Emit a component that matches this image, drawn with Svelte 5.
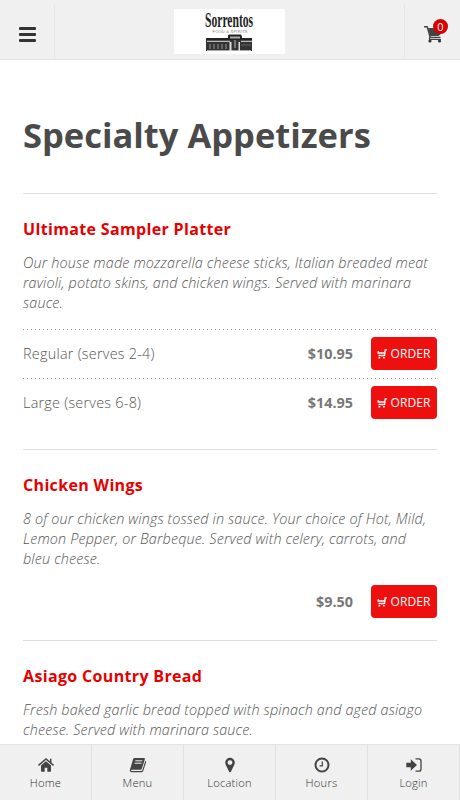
<script>
const items = [
    {
        title: 'Ultimate Sampler Platter',
        text: 'Our house made mozzarella cheese sticks, Italian breaded meat ravioli, potato skins, and chicken wings. Served with marinara sauce.',
        options: [
            { name: 'Regular (serves 2-4)', price: '$10.95' },
            { name: 'Large (serves 6-8)', price: '$14.95' },
        ],
    },
    {
        title: 'Chicken Wings',
        text: '8 of our chicken wings tossed in sauce. Your choice of Hot, Mild, Lemon Pepper, or Barbeque. Served with celery, carrots, and bleu cheese.',
        options: [{ name: '', price: '$9.50' }],
    },
    {
        title: 'Asiago Country Bread',
        text: 'Fresh baked garlic bread topped with spinach and aged asiago cheese. Served with marinara sauce.',
        options: [],
    },
];
const tabs = ['Home', 'Menu', 'Location', 'Hours', 'Login'];
let count = 0;
</script>

<div class="page">
  <header>
    <button class="toggle" aria-label="Open menu"><span></span><span></span><span></span></button>
    <div class="brand">
      <svg width="111" height="45" viewBox="0 0 111 45">
        <rect width="111" height="45" fill="#fff" />
        <text class="logo-name" transform="translate(31 17.500) scale(.58 1)">Sorrentos</text>
        <text class="logo-sub" x="38.500" y="23.500" textLength="35">FOOD &amp; SPIRITS</text>
        <path d="M32 29h22v-2.500l1-1h12l1 2v1.500h10v2H32z" fill="#222" />
        <path d="M32 31h46v11H32z" fill="#333" />
        <path d="M56 27.500h10v2H56z" fill="#aaa" />
        <path d="M33 32.300h23M67 32.300h11" stroke="#ddd" />
        <path d="M33 41.500h44" stroke="#aaa" />
        <path d="M36 35v5M40 35v5M44 35v5M48 35v5M52 35v5" stroke="#999" />
        <path d="M55.500 33h2v9h-2zM64.500 33h1.500v9h-1.500z" fill="#ddd" />
        <path d="M60 31h2v8h-2z" fill="#777" />
        <path d="M67 36h10" stroke="#888" stroke-width=".6" />
      </svg>
    </div>
    <button class="cart" aria-label="Cart">
      <svg width="19" height="17" viewBox="0 0 19 17">
        <path d="M0 .8h3.200l3 10.700h10.300" fill="none" stroke="#444" stroke-width="1.400" />
        <path d="M4 2h13.500v5.500l-3 2.500H6z" fill="#444" />
        <path d="M5.500 11v2.500H17" fill="none" stroke="#444" stroke-width="1.100" />
        <circle cx="6" cy="15" r="1.600" fill="#333" />
        <circle cx="15.500" cy="15" r="1.600" fill="#333" />
      </svg>
      <span class="badge">{count}</span>
    </button>
  </header>

  <main>
    <h1>Specialty Appetizers</h1>
    {#each items as item}
      <section>
        <h2>{item.title}</h2>
        <p>{item.text}</p>
        <div class="options" class:multiple={item.options.length > 1}>
          {#each item.options as option}
            <div class="option">
              <span class="name">{option.name}</span>
              <strong>{option.price}</strong>
              <button class="order">
                <svg width="10" height="10" viewBox="0 0 10 10">
                  <path d="M10 .8H8.200L7.600 6.500H1.500" fill="none" stroke="#fff" stroke-width="1.300" />
                  <path d="M.5 2.300h1.600v1h6v1.500H.5z" fill="#fff" />
                  <path d="M1.500 7.900h1.700v1.700H1.500zM6 7.900h1.700v1.700H6z" fill="#fff" />
                </svg>
                <span>ORDER</span>
              </button>
            </div>
          {/each}
        </div>
      </section>
    {/each}
  </main>

  <nav>
    {#each tabs as tab}
      <a href="#{tab.toLowerCase()}">
        <svg width="18" height="16" viewBox="0 0 18 16" fill="#444">
          {#if tab === 'Home'}
            <path d="M9 4.200l5 4.200V14a.7.700 0 0 1-.7.700h-3v-4H7.700v4h-3A.7.700 0 0 1 4 14V8.400z" />
            <path d="M1.500 8.400L9 2l7.500 6.400M13.700 1.800v4" fill="none" stroke="#444" stroke-width="1.500" />
          {:else if tab === 'Menu'}
            <path d="M5.700 1h9.100c.9 0 1.300.6 1 1.500l-3 9.300c-.2.600-.7 1-1.400 1H2.900c-1 0-1 1.200 0 1.200h9.300c.6 0 1-.3 1.200-.9l3-9.400c.7.300.9.800.7 1.500l-2.900 8.800c-.3.800-1 1.300-1.900 1.300H2.900C1.200 15.300.5 13.700 1 12.500L4 2.400C4.300 1.500 4.900 1 5.700 1z" />
            <path d="M6.300 3.800h7M5.600 6.200h7" stroke="#f0f0f0" stroke-width="1" />
          {:else if tab === 'Location'}
            <path fill-rule="evenodd" d="M9 .8a4.800 4.800 0 0 1 4.800 4.800c0 .9-.2 1.600-.5 2.200l-3.400 6.900c-.4.800-1.400.8-1.800 0L4.700 7.800a5 5 0 0 1-.5-2.200A4.800 4.800 0 0 1 9 .8zM9 3.200a2.400 2.400 0 1 0 0 4.800 2.400 2.400 0 0 0 0-4.800z" />
          {:else if tab === 'Hours'}
            <circle cx="9" cy="8" r="6.500" fill="none" stroke="#444" stroke-width="2" />
            <path d="M9.300 4.500v4.300H6.500" fill="none" stroke="#444" stroke-width="1.200" />
          {:else}
            <path d="M1.300 5.700h4.500V2.200L12 8l-6.200 5.800v-3.500H1.300z" />
            <path d="M10.500 1.800h3.300c1.500 0 2.200.7 2.200 2.200v8c0 1.500-.7 2.200-2.200 2.200h-3.300" fill="none" stroke="#444" stroke-width="1.300" />
          {/if}
        </svg>
        <span>{tab}</span>
      </a>
    {/each}
  </nav>
</div>

<style>
:global(body) {
  margin: 0;
  background: #fff;
}

.page {
  display: flex;
  flex-direction: column;
  height: 800px;
  overflow: hidden;
  font-family: "Open Sans", "Noto Sans", sans-serif;
  font-weight: 300;
  color: #555;
}

button {
  border: 0;
  padding: 0;
  background: none;
  font: inherit;
}

header {
  display: flex;
  flex: none;
  height: 60px;
  box-sizing: border-box;
  padding-top: 4px;
  background: #f0f0f0;
  border-bottom: 1px solid #e3e3e3;
}

.toggle {
  display: flex;
  flex-direction: column;
  align-items: center;
  justify-content: center;
  gap: 3px;
  width: 55px;
  padding-top: 5px;
  border-right: 1px solid #e6e6e6;
}

.toggle span {
  width: 17px;
  height: 3px;
  border-radius: 1px;
  background: #333;
}

.brand {
  display: flex;
  flex: 1;
  justify-content: center;
  padding-top: 5px;
}

.logo-name {
  font: bold 20px "Liberation Serif", serif;
  fill: #222;
}

.logo-sub {
  font: 4px "Liberation Sans", sans-serif;
  fill: #777;
}

.cart {
  position: relative;
  width: 56px;
  padding: 6px 0 0 1px;
  border-left: 1px solid #e6e6e6;
}

.cart svg {
  display: block;
  margin: 0 auto;
}

.badge {
  position: absolute;
  top: 15px;
  right: 12px;
  width: 15px;
  height: 15px;
  border-radius: 50%;
  background: #d80000;
  color: #fff;
  font-size: 11px;
  font-weight: 400;
  line-height: 15px;
  text-align: center;
}

main {
  flex: 1;
  min-height: 0;
  overflow: hidden;
  padding: 0 23px;
}

h1 {
  margin: 0;
  padding: 50px 0 33px;
  color: #4a4a4a;
  font-size: 34.5px;
  font-weight: 700;
  line-height: 50px;
}

section {
  padding: 23px 0 22px;
  border-top: 1px solid #ddd;
}

h2 {
  margin: 0 0 12px;
  color: #e60000;
  font-size: 16px;
  font-weight: 700;
  letter-spacing: .34px;
  line-height: 24px;
}

p {
  margin: 0 0 16px;
  font-size: 14.4px;
  font-style: italic;
  letter-spacing: .14px;
  line-height: 20px;
}

.option {
  display: flex;
  align-items: center;
  font-size: 14.4px;
}

.multiple .option {
  padding: 8px 0;
  background: repeating-linear-gradient(90deg, #999 0 1px, transparent 1px 4px) top / 100% 1px no-repeat;
}

.name {
  flex: 1;
  letter-spacing: .25px;
}

.name,
strong {
  margin-top: -1px;
}

strong {
  margin-right: 18px;
  color: #777;
  font-weight: 700;
}

.order {
  display: flex;
  align-items: center;
  justify-content: center;
  gap: 3px;
  width: 66px;
  height: 33px;
  border-radius: 4px;
  background: #ee0f0f;
  color: #fff;
  font-size: 12px;
  font-weight: 400;
  letter-spacing: .1px;
}

nav {
  display: flex;
  flex: none;
  height: 56px;
  box-sizing: border-box;
  border-top: 1px solid #e3e3e3;
  background: #f0f0f0;
}

nav a {
  display: flex;
  flex: 1;
  flex-direction: column;
  align-items: center;
  box-sizing: border-box;
  padding-top: 12px;
  border-right: 1px solid #e0e0e0;
  color: #333;
  font-size: 11.2px;
  letter-spacing: .2px;
  line-height: 20px;
  text-decoration: none;
}
</style>
